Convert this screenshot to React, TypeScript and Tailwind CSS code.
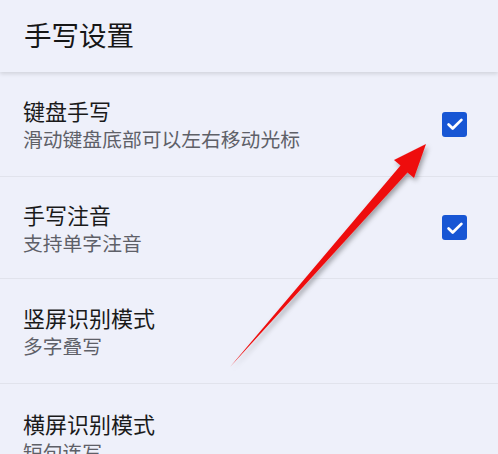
const rows = [
  { title: '键盘手写', desc: '滑动键盘底部可以左右移动光标', checked: true, h: 'h-[105px]' },
  { title: '手写注音', desc: '支持单字注音', checked: true, h: 'h-[102px]' },
  { title: '竖屏识别模式', desc: '多字叠写', checked: false, h: 'h-[105px]' },
  { title: '横屏识别模式', desc: '短句连写', checked: false, h: 'h-[105px]' },
]

function Checkbox() {
  return (
    <div className="w-[25px] h-[25px] rounded-[3px] bg-[#1756d4] flex items-center justify-center">
      <svg width="22" height="22" viewBox="0 0 24 24" fill="none" stroke="white" strokeWidth="3" strokeLinecap="round" strokeLinejoin="round">
        <path d="M5 12.5l4.5 4.5L19 7.5" />
      </svg>
    </div>
  )
}

function Arrow() {
  return (
    <svg className="absolute left-0 top-0 pointer-events-none" width="498" height="454" viewBox="0 0 498 454">
      <defs>
        <filter id="sh" x="-20%" y="-20%" width="140%" height="140%">
          <feDropShadow dx="2" dy="3" stdDeviation="2.5" floodColor="#000" floodOpacity="0.35" />
        </filter>
      </defs>
      <polygon
        points="230,367 400.5,165.5 394,160 426,144 414,178 407.5,172.5"
        fill="#ee0d0d"
        filter="url(#sh)"
      />
    </svg>
  )
}

export default function App() {
  return (
    <div
      className="relative w-[498px] h-[454px] overflow-hidden bg-[#eef0fa]"
      style={{ fontFamily: '"Noto Sans CJK SC", "Noto Sans", sans-serif' }}
    >
      <div className="h-[72px] flex items-center pl-[24px] pb-[2px] shadow-[0_2px_4px_rgba(0,0,0,0.12)] relative z-10 bg-[#eef0fa]">
        <span className="text-[27.5px] text-[#161616] leading-none">手写设置</span>
      </div>
      {rows.map((r, i) => (
        <div
          key={r.title}
          className={`${r.h} flex items-center pl-[23px] pr-[31px] ${i < rows.length - 1 ? 'border-b border-[#e1e3ec]' : ''}`}
        >
          <div className="flex-1 flex flex-col gap-[6px]">
            <span className="text-[22px] leading-[24px] text-[#1a1a1a]">{r.title}</span>
            <span className="text-[19.8px] leading-[22px] text-[#5e6068]">{r.desc}</span>
          </div>
          {r.checked && <Checkbox />}
        </div>
      ))}
      <Arrow />
    </div>
  )
}
